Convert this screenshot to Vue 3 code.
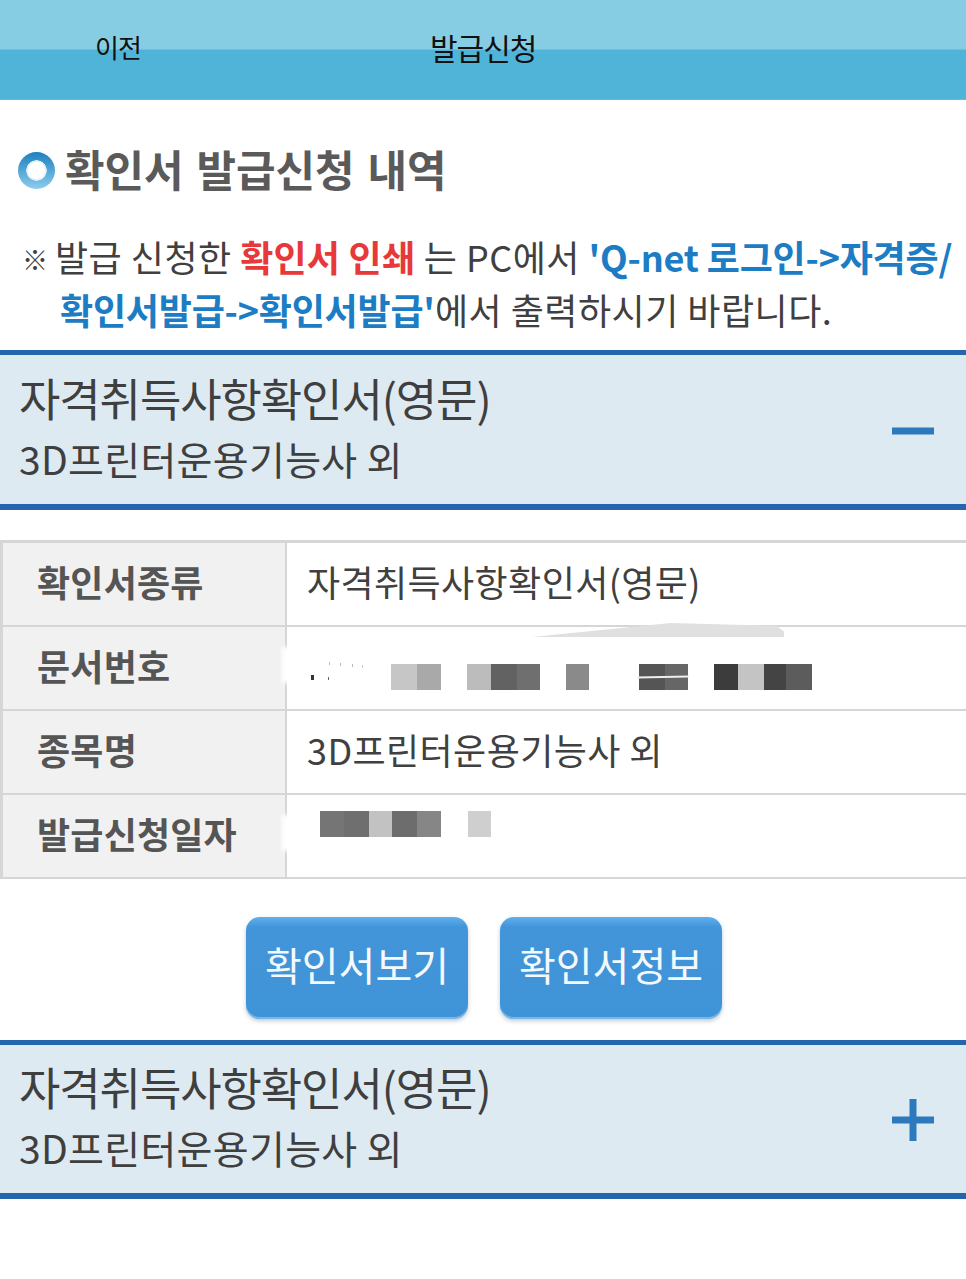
<script setup>
const rowOne = [
  { w: 26, c: '#c6c6c6', m: 0 }, { w: 24, c: '#a9a9a9', m: 0 },
  { w: 24, c: '#bcbcbc', m: 26 }, { w: 26, c: '#626262', m: 0 }, { w: 23, c: '#6f6f6f', m: 0 },
  { w: 23, c: '#8a8a8a', m: 26 },
  { w: 26, c: '#555555', m: 50 }, { w: 23, c: '#666666', m: 0 },
  { w: 24, c: '#3c3c3c', m: 26 }, { w: 26, c: '#c4c4c4', m: 0 }, { w: 22, c: '#444444', m: 0 }, { w: 26, c: '#5c5c5c', m: 0 }
]
const rowTwo = [
  { w: 24, c: '#757575', m: 0 }, { w: 25, c: '#6f6f6f', m: 0 }, { w: 23, c: '#c2c2c2', m: 0 },
  { w: 25, c: '#6d6d6d', m: 0 }, { w: 24, c: '#868686', m: 0 },
  { w: 23, c: '#cfcfcf', m: 27 }
]
const blockStyle = (b) => ({ width: b.w + 'px', background: b.c, marginLeft: b.m + 'px' })
</script>

<template>
  <div class="page">
    <header class="topbar">
      <span class="prev">이전</span>
      <span class="title">발급신청</span>
    </header>

    <h1 class="heading">
      <span class="ring"></span>
      <span>확인서 발급신청 내역</span>
    </h1>

    <div class="note">
      <span class="mark">※</span>
      <p>발급 신청한 <b class="red">확인서 인쇄</b> 는 PC에서 <b class="blue">'Q-net 로그인-&gt;자격증/<br>확인서발급-&gt;확인서발급'</b>에서 출력하시기 바랍니다.</p>
    </div>

    <section class="acc">
      <div class="acc-text">
        <div class="acc-title">자격취득사항확인서(영문)</div>
        <div class="acc-sub">3D프린터운용기능사 외</div>
      </div>
      <svg class="acc-icon" width="44" height="44" viewBox="0 0 44 44"><rect x="1" y="18.500" width="42" height="7" fill="#2c7abd"/></svg>
    </section>

    <div class="table">
      <div class="th">확인서종류</div>
      <div class="td">자격취득사항확인서(영문)</div>
      <div class="th">문서번호</div>
      <div class="td masked first">
        <span class="smear"></span>
        <span class="specks"></span>
        <span class="streak"></span>
        <span class="fade"></span>
        <span v-for="(b, i) in rowOne" :key="i" class="block" :style="blockStyle(b)"></span>
      </div>
      <div class="th">종목명</div>
      <div class="td">3D프린터운용기능사 외</div>
      <div class="th">발급신청일자</div>
      <div class="td masked second">
        <span class="fade"></span>
        <span v-for="(b, i) in rowTwo" :key="i" class="block" :style="blockStyle(b)"></span>
      </div>
    </div>

    <div class="actions">
      <button class="btn">확인서보기</button>
      <button class="btn">확인서정보</button>
    </div>

    <section class="acc last">
      <div class="acc-text">
        <div class="acc-title">자격취득사항확인서(영문)</div>
        <div class="acc-sub">3D프린터운용기능사 외</div>
      </div>
      <svg class="acc-icon" width="44" height="44" viewBox="0 0 44 44"><path d="M1 18.500h17.500V1h7v17.500H43v7H25.500V43h-7V25.500H1z" fill="#2c7abd"/></svg>
    </section>
  </div>
</template>

<style>
html, body { background: #fff; }
</style>

<style scoped>
.page {
  width: 966px;
  height: 1279px;
  overflow: hidden;
  background: #fff;
  font-family: "Noto Sans CJK KR", "Noto Sans", sans-serif;
  color: #3f3f3f;
}
.topbar {
  height: 100px;
  box-sizing: border-box;
  border-bottom: 1px solid #6cb8d8;
  background: linear-gradient(#86cde3 0, #86cde3 49px, #50b4d9 50px, #50b4d9 100%);
  display: flex;
  align-items: flex-start;
  color: #111;
  line-height: 40px;
  padding-top: 27px;
}
.prev { font-size: 26px; margin-left: 95px; width: 335px; letter-spacing: -1px; }
.title { font-size: 30px; letter-spacing: -1px; }
.heading {
  margin: 38px 0 0 18px;
  display: flex;
  align-items: center;
  gap: 10px;
  font-size: 43px;
  line-height: 60px;
  font-weight: 700;
  letter-spacing: 0;
  word-spacing: 3px;
  color: #5a5a5a;
}
.ring {
  width: 37px;
  height: 37px;
  border-radius: 50%;
  margin-top: 4px;
  background:
    radial-gradient(circle at center, #fff 0 8px, #cfe8f5 10px, transparent 10.500px),
    linear-gradient(#1c80c0, #8ccdee);
}
.note {
  margin: 32px 15px 0 22px;
  display: flex;
  font-size: 36px;
  line-height: 53px;
  letter-spacing: 0.5px;
  color: #404040;
}
.mark { width: 33px; flex: none; font-size: 26px; font-weight: 700; margin-top: 2px; }
.note p { margin: 0; padding-left: 5px; text-indent: -5px; white-space: nowrap; }
.red { color: #e8393a; letter-spacing: 0.2px; }
.blue { color: #1c7cc4; letter-spacing: -0.2px; }
.acc {
  margin-top: 14px;
  height: 160px;
  box-sizing: border-box;
  border-top: 5px solid #2565ae;
  border-bottom: 6px solid #2565ae;
  background: #deeaf1;
  padding: 0 31px 0 19px;
  display: flex;
  align-items: center;
  justify-content: space-between;
}
.acc.last { margin-top: 21px; height: 159px; }
.acc-title { font-size: 45px; line-height: 62px; letter-spacing: -1.100px; white-space: nowrap; }
.acc-sub { font-size: 39px; line-height: 58px; letter-spacing: 0.3px; white-space: nowrap; }
.acc-text { margin-top: -6px; }
.acc-icon { margin-top: 2px; }
.table {
  margin-top: 30px;
  display: grid;
  grid-template-columns: 284px 1fr;
  grid-auto-rows: 84px;
  border-top: 3px solid #d6d6d6;
  border-left: 3px solid #d6d6d6;
  box-sizing: border-box;
  height: 339px;
}
.th, .td {
  display: flex;
  align-items: center;
  border-bottom: 2px solid #d6d6d6;
  box-sizing: border-box;
  padding-bottom: 6px;
}
.th {
  background: #f1f1f1;
  border-right: 2px solid #d6d6d6;
  padding-left: 34px;
  font-size: 36px;
  font-weight: 700;
  color: #555;
  letter-spacing: 0.2px;
}
.td { padding-left: 20px; font-size: 36px; color: #404040; letter-spacing: 0.4px; }
.masked { position: relative; display: flex; align-items: flex-start; letter-spacing: 0; }
.first { padding: 37px 0 0 104px; }
.second { padding: 16px 0 0 33px; }
.block { height: 26px; flex: none; display: block; }
.smear {
  position: absolute;
  left: 245px;
  top: -4px;
  width: 252px;
  height: 14px;
  background: #e0e0e0;
  clip-path: polygon(0 100%, 55% 0, 97% 20%, 100% 60%, 100% 100%);
}
.specks {
  position: absolute;
  left: 24px;
  top: 48px;
  width: 3px;
  height: 5px;
  background: #333;
  box-shadow: 16px 1px 0 -1px #666, 17px -14px 0 -1px #bbb, 28px -13px 0 -1px #bbb, 40px -12px 0 -1px #bbb, 50px -11px 0 -1px #ccc;
}
.streak {
  position: absolute;
  z-index: 1;
  left: 350px;
  top: 49px;
  width: 52px;
  height: 2px;
  background: #eee;
  transform: rotate(-1deg);
}
.fade {
  position: absolute;
  left: -5px;
  top: 20px;
  width: 10px;
  height: 36px;
  background: #fff;
  filter: blur(2px);
}
.actions {
  margin-top: 38px;
  display: flex;
  justify-content: center;
  gap: 32px;
  padding-left: 2px;
}
.btn {
  width: 222px;
  height: 102px;
  padding: 0 0 8px;
  box-sizing: border-box;
  border: 0;
  border-radius: 14px;
  font: inherit;
  font-size: 40px;
  color: #f4f9fd;
  background: linear-gradient(#5fb0ee 0, #4295d8 10px, #3f93d7 100%);
  box-shadow: inset 0 -2px 0 #7ab6e4, 0 2px 4px rgba(60, 100, 140, .35);
}
</style>
